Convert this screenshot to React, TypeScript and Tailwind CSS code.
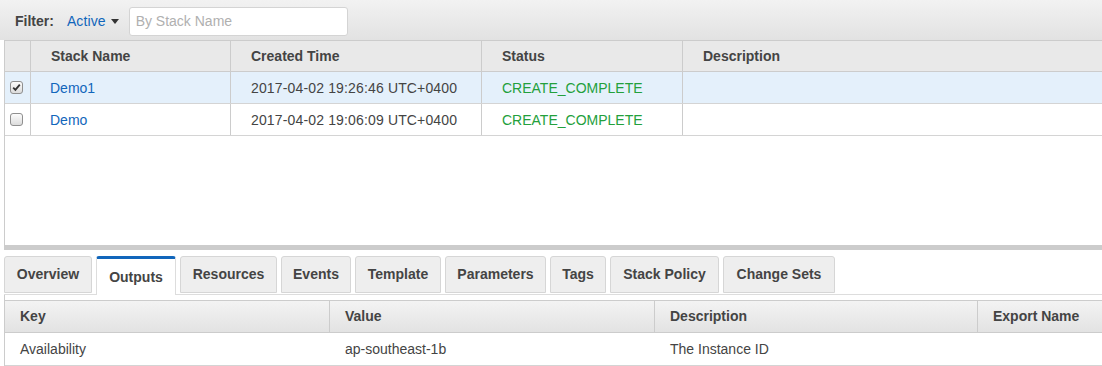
import React from 'react';

const stacks = [
  { name: 'Demo1', created: '2017-04-02 19:26:46 UTC+0400', status: 'CREATE_COMPLETE', selected: true },
  { name: 'Demo', created: '2017-04-02 19:06:09 UTC+0400', status: 'CREATE_COMPLETE', selected: false },
];

const tabs = [
  { label: 'Overview', w: 'w-[88px]' },
  { label: 'Outputs', w: 'w-[80px]', active: true },
  { label: 'Resources', w: 'w-[97px]' },
  { label: 'Events', w: 'w-[70px]' },
  { label: 'Template', w: 'w-[86px]' },
  { label: 'Parameters', w: 'w-[101px]' },
  { label: 'Tags', w: 'w-[56px]' },
  { label: 'Stack Policy', w: 'w-[109px]' },
  { label: 'Change Sets', w: 'w-[112px]' },
];

const Checkbox: React.FC<{ checked: boolean }> = ({ checked }) => (
  <div className="w-[13px] h-[13px] rounded-[3px] border border-[#8f8f8f] bg-gradient-to-b from-[#fcfcfc] to-[#dcdcdc] flex items-center justify-center">
    {checked && (
      <svg width="9" height="9" viewBox="0 0 9 9">
        <path d="M1.2 4.6 L3.4 6.9 L7.8 1.6" fill="none" stroke="#333" strokeWidth="1.8" />
      </svg>
    )}
  </div>
);

export default function App() {
  return (
    <div className="w-[1102px] h-[366px] overflow-hidden bg-white text-[14px] text-[#444] font-['Liberation_Sans',Arial,sans-serif]">
      {/* filter bar */}
      <div className="h-[40px] pt-[2px] flex items-center bg-gradient-to-b from-[#f2f2f2] to-[#e2e2e2]">
        <span className="ml-[15px] font-bold text-[#444]">Filter:</span>
        <button className="ml-[13px] flex items-center text-[#1166bb] tracking-[0.1px]">
          Active
          <svg className="ml-[5px]" width="8" height="5" viewBox="0 0 8 5">
            <path d="M0 0 H8 L4 5 Z" fill="#333" />
          </svg>
        </button>
        <input
          className="ml-[10px] w-[219px] h-[29px] rounded-[3px] border border-[#d4d4d4] bg-white px-[6px] text-[14px] placeholder:text-[#b0b0b0] outline-none"
          placeholder="By Stack Name"
        />
      </div>

      {/* stacks table */}
      <div className="ml-[4px] h-[205px] border-l border-[#ccc]">
        <div className="flex h-[32px] border-t border-b border-[#ccc] bg-[#e9e9e9] font-bold">
          <div className="w-[26px] border-r border-[#ccc]" />
          <div className="w-[200px] border-r border-[#ccc] pl-[20px] flex items-center">Stack Name</div>
          <div className="w-[251px] border-r border-[#ccc] pl-[20px] flex items-center">Created Time</div>
          <div className="w-[201px] border-r border-[#ccc] pl-[20px] flex items-center">Status</div>
          <div className="flex-1 pl-[20px] flex items-center">Description</div>
        </div>
        {stacks.map((s) => (
          <div
            key={s.name}
            className={`flex h-[32px] border-b border-[#d4d4d4] ${s.selected ? 'bg-[#e4f0fb]' : 'bg-white'}`}
          >
            <div className="w-[26px] border-r border-[#ccc] flex items-center pl-[5px]">
              <Checkbox checked={s.selected} />
            </div>
            <div className="w-[200px] border-r border-[#ccc] pl-[19px] pt-[2px] flex items-center text-[#1166bb]">{s.name}</div>
            <div className="w-[251px] border-r border-[#ccc] pl-[20px] pt-[2px] flex items-center tracking-[0.15px]">{s.created}</div>
            <div className="w-[201px] border-r border-[#ccc] pl-[20px] pt-[2px] flex items-center text-[#23a03c]">{s.status}</div>
            <div className="flex-1" />
          </div>
        ))}
      </div>

      {/* splitter */}
      <div className="ml-[4px] h-[5px] bg-[#cccccc]" />

      {/* tabs */}
      <div className="ml-[4px] pt-[6px] flex items-end gap-[4px] h-[45px] border-b border-[#dddddd]">
        {tabs.map((t) =>
          t.active ? (
            <div
              key={t.label}
              className={`${t.w} h-[39px] -mb-px bg-white border-t-[3px] border-t-[#1166bb] border-x border-x-[#dddddd] rounded-t-[3px] font-bold flex items-center justify-center`}
            >
              {t.label}
            </div>
          ) : (
            <div
              key={t.label}
              className={`${t.w} h-[37px] mb-[1px] bg-[#eeeeee] border border-[#d6d6d6] rounded-t-[3px] font-bold flex items-center justify-center`}
            >
              {t.label}
            </div>
          )
        )}
      </div>

      {/* outputs table */}
      <div className="ml-[4px] border-l border-[#ccc] pt-[5px] h-[72px]">
        <div className="flex h-[33px] border-t border-b border-[#ccc] bg-gradient-to-b from-[#f3f3f3] to-[#e3e3e3] font-bold">
          <div className="w-[325px] border-r border-[#ccc] pl-[15px] flex items-center">Key</div>
          <div className="w-[325px] border-r border-[#ccc] pl-[15px] flex items-center">Value</div>
          <div className="w-[323px] border-r border-[#ccc] pl-[15px] flex items-center">Description</div>
          <div className="flex-1 pl-[15px] flex items-center">Export Name</div>
        </div>
        <div className="flex h-[33px] border-b border-[#d4d4d4]">
          <div className="w-[325px] pl-[15px] flex items-center">Availability</div>
          <div className="w-[325px] pl-[15px] flex items-center">ap-southeast-1b</div>
          <div className="w-[323px] pl-[15px] flex items-center">The Instance ID</div>
          <div className="flex-1" />
        </div>
      </div>
    </div>
  );
}
